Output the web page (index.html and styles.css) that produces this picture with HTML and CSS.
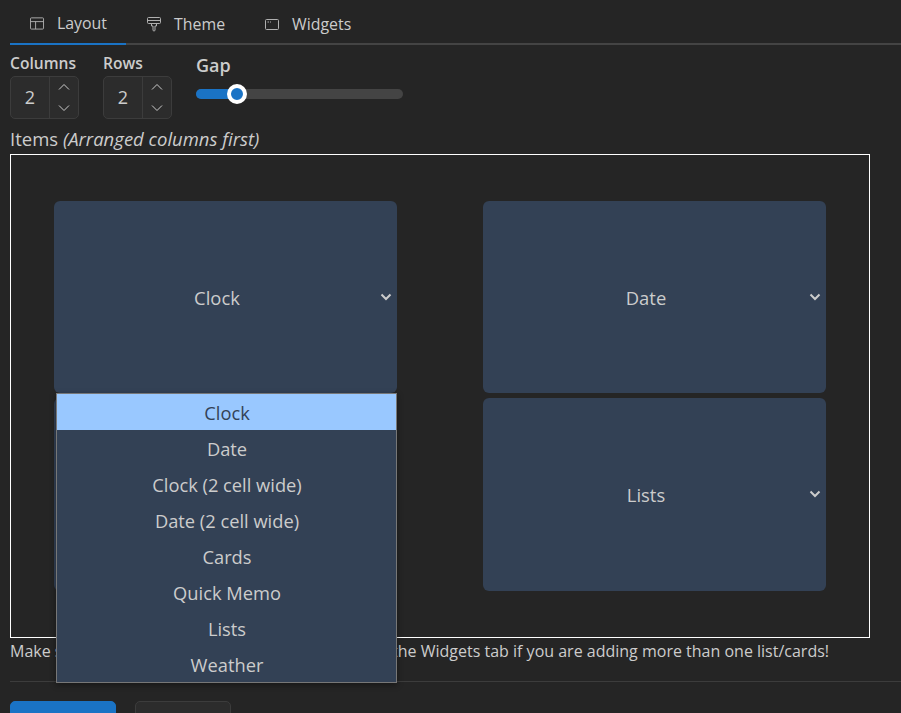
FILE: index.html
```html
<!DOCTYPE html>
<html lang="en">
<head>
    <meta charset="UTF-8">
    <title>Layout settings</title>
    <link rel="stylesheet" href="styles.css">
</head>
<body>
    <div class="tabs">
        <div class="tab active">
            <svg class="tab-icon" viewBox="0 0 16 16"><path d="M1.5 2.5h12a1 1 0 0 1 1 1v10a1 1 0 0 1-1 1h-12a1 1 0 0 1-1-1v-10a1 1 0 0 1 1-1zM.5 6.5h14M6 6.5v8"/></svg>
            <span>Layout</span>
        </div>
        <div class="tab">
            <svg class="tab-icon" viewBox="0 0 16 16"><path d="M2.5 1.5h11a1 1 0 0 1 1 1v4a1 1 0 0 1-1 1h-11a1 1 0 0 1-1-1v-4a1 1 0 0 1 1-1zM1.5 4.5h13M5.5 7.5v2.5h1.5v4a1 1 0 0 0 2 0v-4h1.5v-2.5"/></svg>
            <span>Theme</span>
        </div>
        <div class="tab">
            <svg class="tab-icon" viewBox="0 0 16 16"><path d="M2.5 3.5h11a1 1 0 0 1 1 1v8a1 1 0 0 1-1 1h-11a1 1 0 0 1-1-1v-8a1 1 0 0 1 1-1zM3.5 6h1.5M6 6h1"/></svg>
            <span>Widgets</span>
        </div>
    </div>

    <div class="controls">
        <div class="field">
            <label>Columns</label>
            <div class="number">
                <span class="number-value">2</span>
                <div class="spin">
                    <svg viewBox="0 0 12 12"><path d="M1 8.5l5-5 5 5"/></svg>
                    <svg viewBox="0 0 12 12"><path d="M1 3.5l5 5 5-5"/></svg>
                </div>
            </div>
        </div>
        <div class="field">
            <label>Rows</label>
            <div class="number">
                <span class="number-value">2</span>
                <div class="spin">
                    <svg viewBox="0 0 12 12"><path d="M1 8.5l5-5 5 5"/></svg>
                    <svg viewBox="0 0 12 12"><path d="M1 3.5l5 5 5-5"/></svg>
                </div>
            </div>
        </div>
        <div class="gap-field">
            <label>Gap</label>
            <div class="slider">
                <div class="slider-fill"></div>
                <div class="slider-thumb"></div>
            </div>
        </div>
    </div>

    <p class="items-title">Items <em>(Arranged columns first)</em></p>
    <div class="grid-box">
        <div class="cell">Clock<svg class="chevron" viewBox="0 0 12 12"><path d="M1.5 3.5l4.5 4.5 4.5-4.5"/></svg></div>
        <div class="cell">Date<svg class="chevron" viewBox="0 0 12 12"><path d="M1.5 3.5l4.5 4.5 4.5-4.5"/></svg></div>
        <div class="cell"></div>
        <div class="cell">Lists<svg class="chevron" viewBox="0 0 12 12"><path d="M1.5 3.5l4.5 4.5 4.5-4.5"/></svg></div>
        <ul class="menu">
            <li class="selected">Clock</li>
            <li>Date</li>
            <li>Clock (2 cell wide)</li>
            <li>Date (2 cell wide)</li>
            <li>Cards</li>
            <li>Quick Memo</li>
            <li>Lists</li>
            <li>Weather</li>
        </ul>
    </div>
    <p class="note">Make sure you give every widget a distinct name in the Widgets tab if you are adding more than one list/cards!</p>

    <div class="actions">
        <button class="btn primary" aria-label="Save"></button>
        <button class="btn" aria-label="Cancel"></button>
    </div>
</body>
</html>
```

FILE: styles.css
```css
html, body {
    height: 713px;
    overflow: hidden;
}
body {
    margin: 0;
    padding: 0 0 0 10px;
    background-color: #252525;
    color: #cccccc;
    font-family: "Open Sans", "Noto Sans", sans-serif;
    font-size: 16px;
}
.tabs {
    display: flex;
    height: 45px;
    box-sizing: border-box;
    border-bottom: 2px solid #444444;
}
.tab {
    display: flex;
    align-items: center;
    gap: 12px;
    height: 45px;
    box-sizing: border-box;
    padding: 3px 19px 0 20px;
    font-size: 15.9px;
}
.tab.active {
    width: 116px;
    border-bottom: 2px solid #1a73c5;
}
.tab-icon {
    width: 16px;
    height: 16px;
    fill: none;
    stroke: #b0b0b0;
    stroke-width: 1;
}
.controls {
    display: flex;
    gap: 24px;
    margin-top: 7px;
}
.field label {
    display: block;
    height: 24px;
    line-height: 22px;
    font-size: 15.6px;
    font-weight: 600;
}
.number {
    display: flex;
    width: 69px;
    height: 43px;
    box-sizing: border-box;
    border: 1px solid #3c3c3c;
    border-radius: 5px;
    background-color: #2c2c2c;
}
.number-value {
    width: 38px;
    line-height: 41px;
    font-size: 18px;
    text-align: center;
}
.spin {
    flex: 1;
    display: flex;
    flex-direction: column;
    justify-content: space-around;
    align-items: center;
    border-left: 1px solid #3c3c3c;
}
.spin svg {
    width: 12px;
    height: 12px;
    fill: none;
    stroke: #cccccc;
    stroke-width: 1;
}
.gap-field {
    width: 207px;
}
.gap-field label {
    display: block;
    height: 30px;
    line-height: 26px;
    font-size: 18px;
    font-weight: 600;
}
.slider {
    position: relative;
    height: 10px;
    margin-top: 7px;
    border-radius: 5px;
    background-color: #444444;
}
.slider-fill {
    width: 41px;
    height: 10px;
    border-radius: 5px 0 0 5px;
    background-color: #1a73c5;
}
.slider-thumb {
    position: absolute;
    left: 31px;
    top: -5px;
    width: 20px;
    height: 20px;
    box-sizing: border-box;
    border: 4px solid #ffffff;
    border-radius: 50%;
    background-color: #1a73c5;
}
.items-title {
    margin: 8px 0 0;
    height: 27px;
    line-height: 24px;
    font-size: 18.5px;
}
.grid-box {
    position: relative;
    display: grid;
    grid-template-columns: 343px 343px;
    grid-template-rows: 192px 193px;
    gap: 5px 86px;
    width: 860px;
    height: 484px;
    box-sizing: border-box;
    padding: 46px 43px;
    border: 1px solid #ffffff;
}
.cell {
    position: relative;
    display: flex;
    align-items: center;
    justify-content: center;
    padding-right: 17px;
    border-radius: 6px;
    background-color: #334155;
    font-size: 18.4px;
}
.chevron {
    position: absolute;
    right: 5px;
    top: 90px;
    width: 12px;
    height: 12px;
    fill: none;
    stroke: #cccccc;
    stroke-width: 2;
}
.menu {
    position: absolute;
    left: 45px;
    top: 238px;
    width: 341px;
    box-sizing: border-box;
    margin: 0;
    padding: 0;
    list-style: none;
    border: 1px solid #777777;
    background-color: #334155;
    box-shadow: 0 2px 6px rgba(0, 0, 0, 0.4);
    font-size: 18.3px;
}
.menu li {
    height: 36px;
    padding-left: 1px;
    line-height: 37px;
    text-align: center;
}
.menu .selected {
    background-color: #99c8ff;
    color: #334155;
}
.note {
    margin: 0;
    height: 26px;
    line-height: 26px;
    font-size: 16px;
    white-space: nowrap;
}
.actions {
    display: flex;
    gap: 19px;
    margin-top: 17px;
    padding-top: 19px;
    border-top: 1px solid #3c3c3c;
}
.btn {
    width: 106px;
    height: 38px;
    border: 1px solid #3c3c3c;
    border-radius: 5px;
    background-color: #2c2c2c;
}
.btn + .btn {
    width: 96px;
}
.btn.primary {
    border-color: #1a73c5;
    background-color: #1a73c5;
}
```
